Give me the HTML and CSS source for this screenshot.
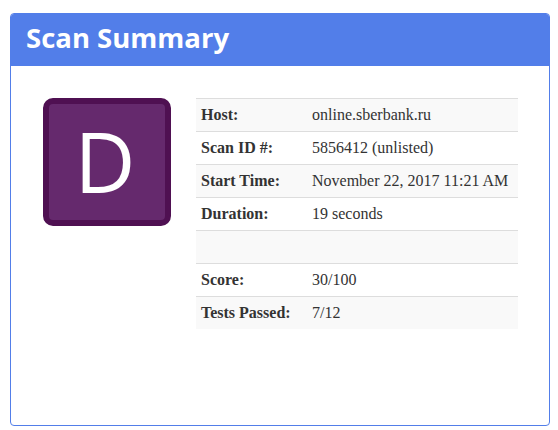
FILE: index.html
```html
<!DOCTYPE html>
<html>
<head>
<meta charset="utf-8">
<link rel="stylesheet" href="styles.css">
</head>
<body>
<div class="card">
  <div class="card-header"><h1 class="title">Scan Summary</h1></div>
  <div class="card-body">
    <div class="grade"><span class="grade-letter">D</span></div>
    <table class="summary">
      <tbody>
        <tr><th>Host:</th><td>online.sberbank.ru</td></tr>
        <tr><th>Scan ID #:</th><td>5856412 (unlisted)</td></tr>
        <tr><th>Start Time:</th><td>November 22, 2017 11:21 AM</td></tr>
        <tr><th>Duration:</th><td>19 seconds</td></tr>
        <tr><th></th><td></td></tr>
        <tr><th>Score:</th><td>30/100</td></tr>
        <tr><th>Tests Passed:</th><td>7/12</td></tr>
      </tbody>
    </table>
  </div>
</div>
</body>
</html>
```
FILE: styles.css
```css
html, body {
  margin: 0;
  padding: 0;
  background: #ffffff;
}
body {
  padding: 13px 8px 0 10px;
}
.card {
  width: 540px;
  height: 413px;
  box-sizing: border-box;
  border: 1px solid #527ee9;
  border-radius: 4px;
  display: flex;
  flex-direction: column;
  overflow: hidden;
}
.card-header {
  background: #527ee9;
  height: 53px;
  box-sizing: border-box;
  margin: -1px -1px 0 -1px;
  padding: 0 0 4px 16px;
  display: flex;
  align-items: center;
}
.title {
  margin: 0;
  font-family: "Open Sans", "Noto Sans", sans-serif;
  font-weight: 700;
  font-size: 27.5px;
  color: #ffffff;
  line-height: 1;
}
.card-body {
  display: flex;
  align-items: flex-start;
  padding: 32px 0 0 32px;
  gap: 25px;
}
.grade {
  width: 128px;
  height: 128px;
  box-sizing: border-box;
  border: 6px solid #4f1052;
  border-radius: 10px;
  background: #65296d;
  display: flex;
  align-items: center;
  justify-content: center;
}
.grade-letter {
  font-family: "Open Sans", "Noto Sans", sans-serif;
  font-size: 84px;
  line-height: 1;
  color: #ffffff;
  margin-left: -4px;
  margin-top: -2px;
}
.summary {
  width: 322px;
  border-collapse: collapse;
  border-spacing: 0;
  font-family: "Liberation Serif", "Times New Roman", serif;
  font-size: 16px;
  color: #333333;
}
.summary th, .summary td {
  border-top: 1px solid #dddddd;
  padding: 5px 5px;
  height: 22px;
  line-height: 22px;
  text-align: left;
  vertical-align: middle;
}
.summary th {
  width: 101px;
  font-weight: 700;
}
.summary tr:nth-child(odd) {
  background: #f9f9f9;
}
```
